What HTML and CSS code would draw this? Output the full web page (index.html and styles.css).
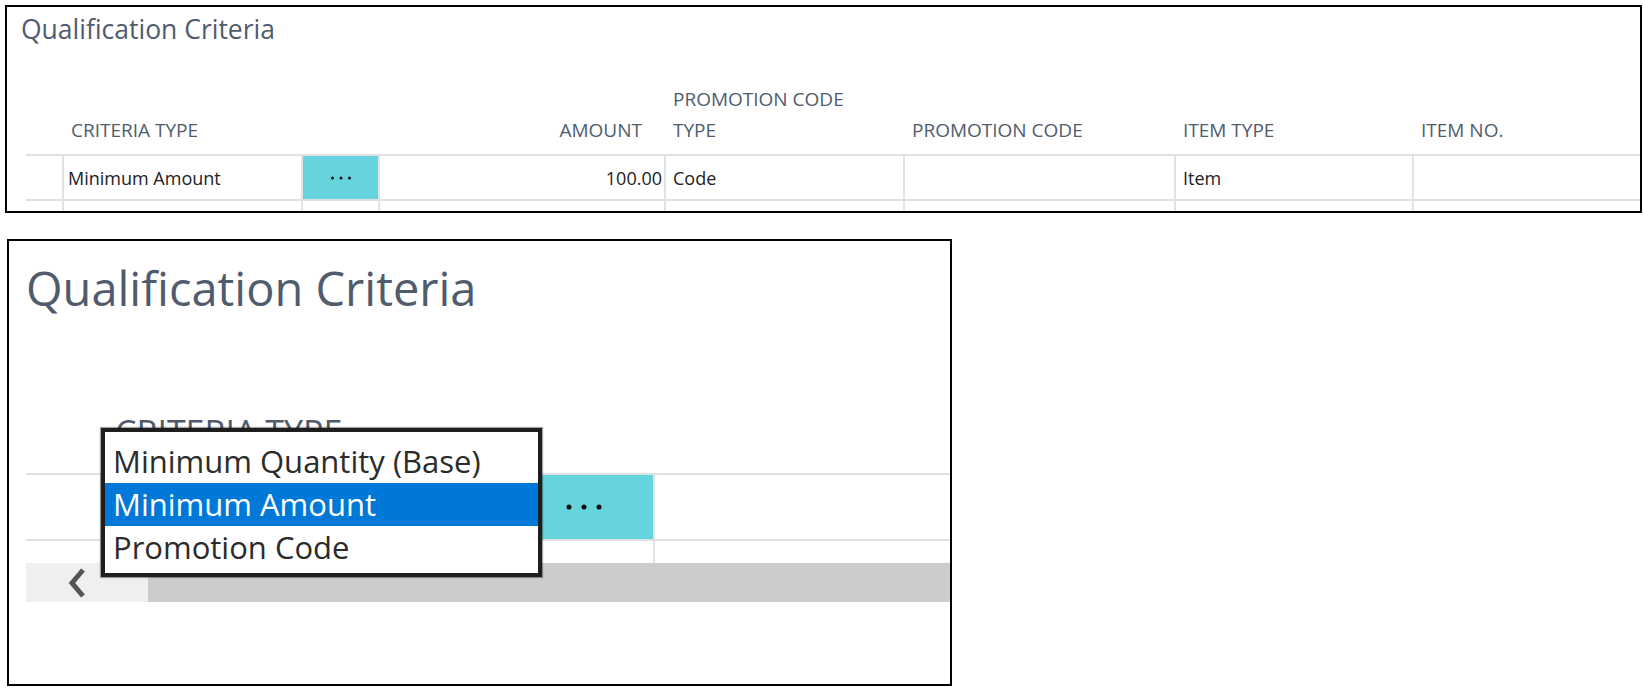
FILE: index.html
```html
<!DOCTYPE html>
<html lang="en">
<head>
<meta charset="utf-8">
<title>Qualification Criteria</title>
<link rel="stylesheet" href="styles.css">
</head>
<body>
<div class="page">
  <section class="panel panel-wide">
    <h2 class="title">Qualification Criteria</h2>
    <div class="hrow">
      <div class="hc"></div>
      <div class="hc">CRITERIA TYPE</div>
      <div class="hc"></div>
      <div class="hc right">AMOUNT</div>
      <div class="hc">PROMOTION CODE<br>TYPE</div>
      <div class="hc">PROMOTION CODE</div>
      <div class="hc">ITEM TYPE</div>
      <div class="hc">ITEM NO.</div>
    </div>
    <div class="row">
      <div class="c"></div>
      <div class="c">Minimum Amount</div>
      <div class="c teal"><svg class="dots" width="24" height="4" viewBox="0 0 24 4"><circle cx="3.5" cy="2" r="1.5"/><circle cx="12" cy="2" r="1.5"/><circle cx="20.5" cy="2" r="1.5"/></svg></div>
      <div class="c num">100.00</div>
      <div class="c">Code</div>
      <div class="c"></div>
      <div class="c">Item</div>
      <div class="c"></div>
    </div>
    <div class="row">
      <div class="c"></div><div class="c"></div><div class="c"></div><div class="c"></div>
      <div class="c"></div><div class="c"></div><div class="c"></div><div class="c"></div>
    </div>
  </section>

  <section class="panel panel-zoom">
    <h2 class="title">Qualification Criteria</h2>
    <div class="hrow">
      <div class="hc"></div>
      <div class="hc">CRITERIA TYPE</div>
      <div class="hc"></div>
      <div class="hc"></div>
    </div>
    <div class="row">
      <div class="c"></div>
      <div class="c"></div>
      <div class="c teal"><svg class="dots" width="36" height="6" viewBox="0 0 36 6"><circle cx="3" cy="3" r="2.5"/><circle cx="18" cy="3" r="2.5"/><circle cx="33" cy="3" r="2.5"/></svg></div>
      <div class="c"></div>
    </div>
    <div class="row row-short">
      <div class="c"></div><div class="c"></div><div class="c"></div><div class="c"></div>
    </div>
    <div class="scrollbar">
      <div class="scroll-btn"><svg width="20" height="30" viewBox="0 0 20 30"><polyline points="16,2 5,15 16,28" fill="none" stroke="#555" stroke-width="5" stroke-linejoin="miter"/></svg></div>
      <div class="scroll-track"></div>
    </div>
    <ul class="dropdown">
      <li>Minimum Quantity (Base)</li>
      <li class="selected">Minimum Amount</li>
      <li>Promotion Code</li>
    </ul>
  </section>
</div>
</body>
</html>
```

FILE: styles.css
```css
* { box-sizing: border-box; }
html, body { margin: 0; padding: 0; background: #fff; }
body { font-family: "Open Sans", "Noto Sans", sans-serif; color: #222; }

.page {
  padding: 5px 0 0 5px;
  display: flex;
  flex-direction: column;
  align-items: flex-start;
}

.panel {
  border: 2px solid #000;
  overflow: hidden;
  background: #fff;
}

.title {
  margin: 0;
  font-weight: 400;
  color: #505c6d;
  white-space: nowrap;
}

.hc {
  color: #505c6d;
  white-space: nowrap;
}
.hc.right { text-align: right; }

.row { display: grid; border-top: 2px solid #dfe0e3; }
.hrow { display: grid; align-items: end; }
.row .c + .c { border-left: 2px solid #e2e3e6; }
.c { display: flex; align-items: center; white-space: nowrap; overflow: hidden; }
.c.num { justify-content: flex-end; }
.teal { background: #66d4dc; justify-content: center; }
.dots { fill: #111; display: block; }

/* ---------- wide panel ---------- */
.panel-wide {
  width: 1637px;
  height: 208px;
}
.panel-wide .title {
  font-size: 26.5px;
  line-height: 36px;
  padding: 4px 0 0 14px;
}
.panel-wide .hrow,
.panel-wide .row {
  margin-left: 19px;
  grid-template-columns: 36px 239px 77px 286px 239px 271px 238px 1fr;
}
.panel-wide .hrow {
  height: 107px;
  padding-bottom: 8px;
  font-size: 19px;
  line-height: 31px;
}
.panel-wide .hc { padding-left: 9px; }
.panel-wide .hc.right { padding: 0 22px 0 0; }
.panel-wide .row { height: 45px; font-size: 18px; }
.panel-wide .c { padding-left: 7px; }
.panel-wide .c:nth-child(2) { padding-left: 4px; }
.panel-wide .c.num { padding: 0 2px 0 0; }
.panel-wide .c.teal { padding: 0; }

/* ---------- zoomed panel ---------- */
.panel-zoom {
  position: relative;
  margin: 26px 0 0 2px;
  width: 945px;
  height: 447px;
}
.panel-zoom .title {
  font-size: 47px;
  line-height: 64px;
  padding: 15px 0 0 17px;
}
.panel-zoom .hrow,
.panel-zoom .row,
.panel-zoom .scrollbar {
  margin-left: 17px;
}
.panel-zoom .hrow,
.panel-zoom .row {
  grid-template-columns: 74px 412px 141px 1fr;
}
.panel-zoom .hrow {
  height: 153px;
  align-items: start;
  padding-top: 89px;
  font-size: 34px;
  line-height: 46px;
}
.panel-zoom .hc { padding-left: 15px; }
.panel-zoom .row { height: 66px; }
.panel-zoom .row-short { height: 24px; }

.scrollbar {
  display: flex;
  height: 39px;
}
.scroll-btn {
  width: 122px;
  background: #efefef;
  display: flex;
  align-items: center;
  padding-left: 41px;
}
.scroll-track {
  flex: 1;
  background: #cccccc;
}

.dropdown {
  position: absolute;
  left: 92px;
  top: 187px;
  width: 441px;
  height: 149px;
  margin: 0;
  padding: 8px 0 4px;
  list-style: none;
  background: #fff;
  border: 4px solid #1e1e1e;
  box-shadow: 0 0 1px 1px rgba(0,0,0,0.35);
  font-size: 31px;
  line-height: 43px;
  color: #2b2b2b;
}
.dropdown li {
  height: 43px;
  padding-left: 8px;
  white-space: nowrap;
}
.dropdown li.selected {
  background: #0078d7;
  color: #fff;
}
```
